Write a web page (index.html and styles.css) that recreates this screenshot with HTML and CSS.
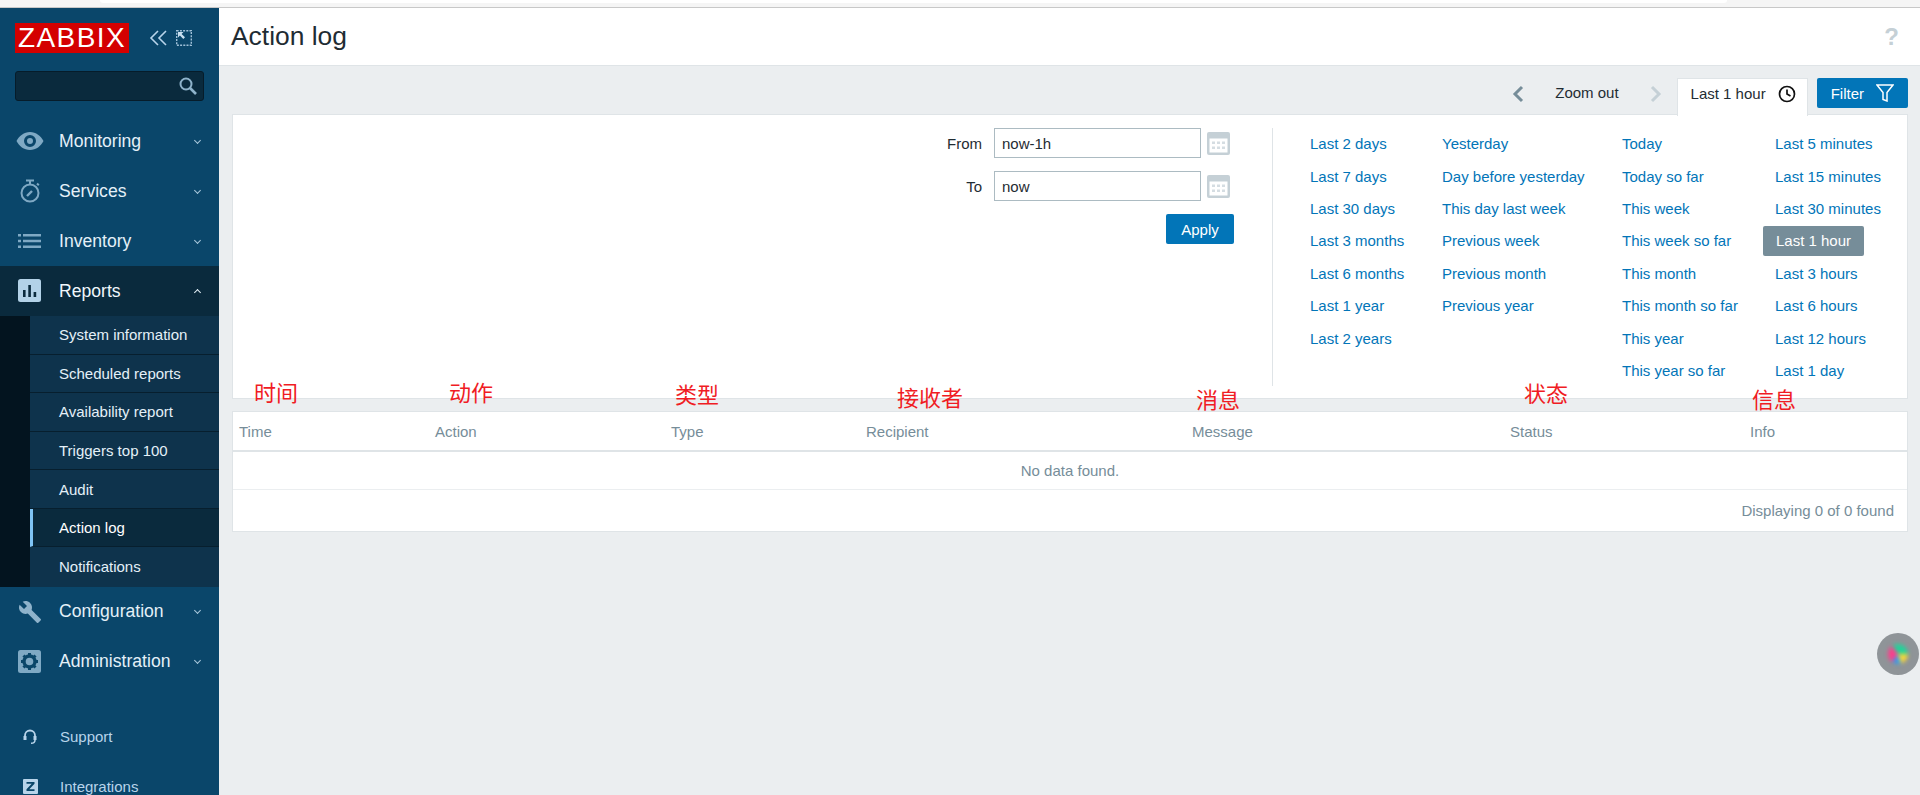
FILE: index.html
```html
<!DOCTYPE html>
<html lang="en">
<head>
  <meta charset="UTF-8">
  <meta name="viewport" content="width=device-width, initial-scale=1.0">
  <title>Action log</title>
  <link rel="stylesheet" href="styles.css">
</head>
<body>
  <div class="browser-strip"><div class="browser-tab"></div></div>
  <div class="layout">
    <aside class="sidebar">
      <div class="logo-row">
        <div class="logo">ZABBIX</div>
        <svg class="side-ctl" width="20" height="16" viewBox="0 0 20 16" fill="none" stroke="#b8d4ea" stroke-width="1.6"><path d="M9 1 2 8l7 7M17 1l-7 7 7 7"/></svg>
        <svg class="side-ctl" width="16" height="16" viewBox="0 0 16 16" fill="none" stroke="#9fc0d8"><rect x="0.700" y="0.700" width="14.600" height="14.600" stroke-width="1.400" stroke-dasharray="2 1.200"/><path d="M2 2h5.500L5.600 3.900 9 7.300 7.300 9 3.900 5.600 2 7.500z" fill="#c8dff0" stroke="none"/></svg>
      </div>
      <div class="search">
        <svg width="20" height="20" viewBox="0 0 20 20" fill="none" stroke="#8fb3cb" stroke-width="2"><circle cx="8" cy="8" r="5.500"/><path d="m12 12 6 6" stroke-width="2.600"/></svg>
      </div>
      <nav class="menu">
        <a class="menu-item">
          <span class="menu-icon"><svg width="28" height="20" viewBox="0 0 28 20"><path fill="#7fa9c4" fill-rule="evenodd" d="M14 1C8 1 3 5 0.500 10 3 15 8 19 14 19s11-4 13.500-9C25 5 20 1 14 1zm0 3a6 6 0 1 1 0 12 6 6 0 0 1 0-12zm0 3a3 3 0 1 0 0 6 3 3 0 0 0 0-6z"/></svg></span>
          <span class="menu-label">Monitoring</span><span class="chev"></span>
        </a>
        <a class="menu-item">
          <span class="menu-icon"><svg width="22" height="24" viewBox="0 0 22 24" fill="none" stroke="#7fa9c4" stroke-width="2"><circle cx="11" cy="14" r="8.500"/><path d="M7 1.500h8M11 2v3M18 4.500l1.800 1.800" /><path d="m8 17 5-5" stroke-width="2.400"/></svg></span>
          <span class="menu-label">Services</span><span class="chev"></span>
        </a>
        <a class="menu-item">
          <span class="menu-icon"><svg width="24" height="16" viewBox="0 0 24 16" fill="#7fa9c4"><path d="M0 1h3v2.600H0zM5 1h18v2.600H5zM0 6.700h3v2.600H0zM5 6.700h18v2.600H5zM0 12.400h3V15H0zM5 12.400h18V15H5z"/></svg></span>
          <span class="menu-label">Inventory</span><span class="chev"></span>
        </a>
        <a class="menu-item open">
          <span class="menu-icon"><svg width="24" height="24" viewBox="0 0 24 24"><rect width="23" height="23" rx="2.500" fill="#b3d2e8"/><path fill="#0a2a3d" d="M5 11h2.600v7H5zM10.300 6h2.600v12h-2.600zM15.600 13h2.600v5h-2.600z"/></svg></span>
          <span class="menu-label">Reports</span><span class="chev up"></span>
        </a>
        <div class="submenu">
          <a class="sub-item">System information</a>
          <a class="sub-item">Scheduled reports</a>
          <a class="sub-item">Availability report</a>
          <a class="sub-item">Triggers top 100</a>
          <a class="sub-item">Audit</a>
          <a class="sub-item current">Action log</a>
          <a class="sub-item">Notifications</a>
        </div>
        <a class="menu-item">
          <span class="menu-icon"><svg width="24" height="24" viewBox="0 0 24 24"><path fill="#8fb3cb" d="M22.700 19l-9.100-9.100c.9-2.300.4-5-1.500-6.900-2-2-5-2.400-7.400-1.300L9 6 6 9 1.600 4.700C.4 7.100.9 10.100 2.900 12.100c1.900 1.900 4.600 2.400 6.900 1.500l9.100 9.100c.4.4 1 .4 1.400 0l2.300-2.300c.5-.4.5-1.100.1-1.400z"/></svg></span>
          <span class="menu-label">Configuration</span><span class="chev"></span>
        </a>
        <a class="menu-item">
          <span class="menu-icon"><svg width="24" height="24" viewBox="0 0 24 24"><rect width="23" height="23" rx="2.500" fill="#7fa9c4"/><circle cx="11.500" cy="11.500" r="5.500" fill="none" stroke="#0a4669" stroke-width="3.400"/><path stroke="#0a4669" stroke-width="3" d="M11.500 3v3M11.500 17v3M3 11.500h3M17 11.500h3M5.500 5.500l2 2M15.500 15.500l2 2M17.500 5.500l-2 2M7.500 15.500l-2 2"/></svg></span>
          <span class="menu-label">Administration</span><span class="chev"></span>
        </a>
      </nav>
      <div class="user-menu">
        <a class="user-item">
          <span class="user-icon"><svg width="14" height="16" viewBox="0 0 14 16" fill="none" stroke="#b8d4ea" stroke-width="1.800"><path d="M2 8V6.500a5 5 0 0 1 10 0V8"/><path d="M2 7v4M12 7v4" stroke-width="3"/><path d="M12 11c0 2-1.500 3.300-4 3.300" stroke-width="1.500"/></svg></span>
          Support
        </a>
        <a class="user-item">
          <span class="user-icon"><svg width="15" height="15" viewBox="0 0 15 15"><rect width="15" height="15" rx="1" fill="#b8d4ea"/><path fill="#0a4669" d="M3.500 3h8v1.800L6.300 10.300h5.200V12h-8v-1.800l5.200-5.500H3.500z"/></svg></span>
          Integrations
        </a>
      </div>
    </aside>

    <main class="main">
      <header class="page-header">
        <h1>Action log</h1>
        <span class="help">?</span>
      </header>

      <div class="content">
        <div class="filter-tabs">
          <svg class="nav-arrow" width="12" height="18" viewBox="0 0 12 18" fill="none" stroke="#768d99" stroke-width="3"><path d="M10 2 3 9l7 7"/></svg>
          <span class="zoom-out">Zoom out</span>
          <svg class="nav-arrow" width="12" height="18" viewBox="0 0 12 18" fill="none" stroke="#c5d0d6" stroke-width="3"><path d="m2 2 7 7-7 7"/></svg>
          <div class="tab-active">
            Last 1 hour
            <svg width="18" height="18" viewBox="0 0 18 18" fill="none" stroke="#111" stroke-width="1.700"><circle cx="9" cy="9" r="7.500"/><path d="M9 4.500V9l3.500 2"/></svg>
          </div>
          <button class="btn-filter">
            Filter
            <svg width="18" height="18" viewBox="0 0 18 18" fill="none" stroke="#fff" stroke-width="1.500"><path d="M1 1h16l-6 7.500V17l-4-1.500v-7z"/></svg>
          </button>
        </div>

        <section class="filter-panel">
          <div class="time-form">
            <div class="form-row">
              <label>From</label>
              <input class="time-input" type="text" value="now-1h">
              <svg class="cal" width="23" height="23" viewBox="0 0 23 23"><rect width="23" height="23" rx="2" fill="#c5d0d6"/><rect x="2.500" y="6.500" width="18" height="14" fill="#fff"/><path fill="#d5dde2" d="M5 9.500h3v2.500H5zM10 9.500h3v2.500h-3zM15 9.500h3v2.500h-3zM5 14.500h3V17H5zM10 14.500h3V17h-3zM15 14.500h3V17h-3z"/></svg>
            </div>
            <div class="form-row">
              <label>To</label>
              <input class="time-input" type="text" value="now">
              <svg class="cal" width="23" height="23" viewBox="0 0 23 23"><rect width="23" height="23" rx="2" fill="#c5d0d6"/><rect x="2.500" y="6.500" width="18" height="14" fill="#fff"/><path fill="#d5dde2" d="M5 9.500h3v2.500H5zM10 9.500h3v2.500h-3zM15 9.500h3v2.500h-3zM5 14.500h3V17H5zM10 14.500h3V17h-3zM15 14.500h3V17h-3z"/></svg>
            </div>
            <button class="btn-apply">Apply</button>
          </div>
          <div class="quick-ranges">
            <ul class="range-col col-a">
              <li><a>Last 2 days</a></li>
              <li><a>Last 7 days</a></li>
              <li><a>Last 30 days</a></li>
              <li><a>Last 3 months</a></li>
              <li><a>Last 6 months</a></li>
              <li><a>Last 1 year</a></li>
              <li><a>Last 2 years</a></li>
            </ul>
            <ul class="range-col col-b">
              <li><a>Yesterday</a></li>
              <li><a>Day before yesterday</a></li>
              <li><a>This day last week</a></li>
              <li><a>Previous week</a></li>
              <li><a>Previous month</a></li>
              <li><a>Previous year</a></li>
            </ul>
            <ul class="range-col col-c">
              <li><a>Today</a></li>
              <li><a>Today so far</a></li>
              <li><a>This week</a></li>
              <li><a>This week so far</a></li>
              <li><a>This month</a></li>
              <li><a>This month so far</a></li>
              <li><a>This year</a></li>
              <li><a>This year so far</a></li>
            </ul>
            <ul class="range-col col-d">
              <li><a>Last 5 minutes</a></li>
              <li><a>Last 15 minutes</a></li>
              <li><a>Last 30 minutes</a></li>
              <li><a class="selected">Last 1 hour</a></li>
              <li><a>Last 3 hours</a></li>
              <li><a>Last 6 hours</a></li>
              <li><a>Last 12 hours</a></li>
              <li><a>Last 1 day</a></li>
            </ul>
          </div>
        </section>

        <section class="table-card">
          <table class="log-table">
            <thead>
              <tr>
                <th class="w-time">Time</th>
                <th class="w-action">Action</th>
                <th class="w-type">Type</th>
                <th class="w-recipient">Recipient</th>
                <th class="w-message">Message</th>
                <th class="w-status">Status</th>
                <th>Info</th>
              </tr>
            </thead>
            <tbody>
              <tr><td class="no-data" colspan="7">No data found.</td></tr>
            </tbody>
          </table>
          <div class="table-stats">Displaying 0 of 0 found</div>
        </section>
      </div>
    </main>
  </div>

  <!-- red notes drawn on top of the screenshot -->
  <span class="note note-time">时间</span>
  <span class="note note-action">动作</span>
  <span class="note note-type">类型</span>
  <span class="note note-recipient">接收者</span>
  <span class="note note-message">消息</span>
  <span class="note note-status">状态</span>
  <span class="note note-info">信息</span>

  <div class="float-ball"><div class="ball-core"></div></div>
</body>
</html>
```

FILE: styles.css
```css
/* General Styles */
* {
  box-sizing: border-box;
}

html, body {
  margin: 0;
  height: 100%;
  overflow: hidden;
}

body {
  position: relative;
  font-family: 'Liberation Sans', Arial, sans-serif;
  font-size: 15px;
  color: #1f2c33;
  background: #ebeef0;
  display: flex;
  flex-direction: column;
}

.browser-strip {
  height: 8px;
  flex: none;
  background: #f5f5f5;
  border-bottom: 1px solid #c8c8c8;
}

.browser-tab {
  margin-left: 100px;
  width: 1627px;
  height: 3px;
  background: #fff;
  border-radius: 0 0 4px 4px;
}

.layout {
  flex: 1;
  display: flex;
  min-height: 0;
}

/* Sidebar */
.sidebar {
  width: 219px;
  flex: none;
  background: #0a466a;
  overflow: hidden;
}

.logo-row {
  display: flex;
  align-items: center;
  height: 30px;
  margin: 15px 0 0 15px;
}

.logo {
  width: 114px;
  height: 30px;
  background: #d40000;
  color: #fff;
  font-size: 28px;
  line-height: 30px;
  text-align: center;
  letter-spacing: 1.400px;
  margin-right: 20px;
}

.side-ctl {
  margin-right: 7px;
}

.search {
  display: flex;
  align-items: center;
  justify-content: flex-end;
  width: 189px;
  height: 30px;
  margin: 18px 0 0 15px;
  padding-right: 5px;
  background: #0a2a3d;
  border: 1px solid #061c2a;
  border-radius: 3px;
}

.menu {
  margin-top: 15px;
}

.menu-item {
  display: flex;
  align-items: center;
  height: 50px;
  color: #e4f0f8;
  font-size: 17.600px;
}

.menu-item.open {
  background: #0a2a3d;
  color: #f0f7fc;
}

.menu-icon {
  width: 59px;
  flex: none;
  display: flex;
  justify-content: center;
}

.menu-label {
  flex: 1;
}

.chev {
  width: 5px;
  height: 5px;
  margin: -2px 19px 0 0;
  border-right: 1.200px solid #a9c8dc;
  border-bottom: 1.200px solid #a9c8dc;
  transform: rotate(45deg);
}

.chev.up {
  margin-top: 3px;
  border-color: #e4f0f8;
  transform: rotate(225deg);
}

.submenu {
  padding-left: 30px;
  background: #03141f;
}

.sub-item {
  display: flex;
  align-items: center;
  height: 38.570px;
  padding-left: 29px;
  color: #e4f0f8;
  background: #0e334c;
  border-bottom: 1px solid #071f2e;
}

.sub-item:last-child {
  height: 39.500px;
  padding-bottom: 1px;
  border-bottom: 0;
}

.sub-item.current {
  background: #0a2a3d;
  color: #fff;
  border-left: 3px solid #7fc4f5;
  padding-left: 26px;
}

.user-menu {
  margin-top: 25px;
}

.user-item {
  display: flex;
  align-items: center;
  height: 50px;
  color: #b8d4ea;
}

.user-icon {
  width: 60px;
  display: flex;
  justify-content: center;
}

/* Main */
.main {
  flex: 1;
  min-width: 0;
  display: flex;
  flex-direction: column;
}

.page-header {
  height: 58px;
  flex: none;
  display: flex;
  align-items: center;
  justify-content: space-between;
  padding: 0 21px 0 12px;
  background: #fff;
  border-bottom: 1px solid #dfe4e7;
}

h1 {
  margin: 0;
  font-size: 26.400px;
  font-weight: normal;
  color: #1f2c33;
}

.help {
  font-size: 24px;
  font-weight: bold;
  color: #c5d0d6;
}

.content {
  padding: 12px 12px 0 13px;
}

.filter-tabs {
  display: flex;
  align-items: flex-start;
  justify-content: flex-end;
  height: 36px;
  position: relative;
  z-index: 1;
}

.nav-arrow {
  margin-top: 7px;
}

.zoom-out {
  margin: 0 31px 0 31px;
  line-height: 30px;
}

.tab-active {
  display: flex;
  align-items: center;
  gap: 12px;
  height: 38px;
  padding: 0 11px 8px 13px;
  margin-left: 15px;
  background: #fff;
  border: 1px solid #dfe4e7;
  border-bottom: 0;
}

.btn-filter {
  display: flex;
  align-items: center;
  gap: 12px;
  height: 30px;
  margin-left: 9px;
  padding: 0 14px;
  border: 0;
  border-radius: 2px;
  background: #0275b8;
  color: #fff;
  font-family: inherit;
  font-size: 15px;
}

.filter-panel {
  display: flex;
  height: 285px;
  background: #fff;
  border: 1px solid #dfe4e7;
}

.time-form {
  width: 1040px;
  flex: none;
  padding-top: 13px;
}

.form-row {
  display: flex;
  align-items: center;
  justify-content: flex-end;
  height: 30px;
  margin-bottom: 13px;
  padding-right: 43px;
}

.form-row label {
  margin-right: 12px;
}

.time-input {
  width: 207px;
  height: 30px;
  padding: 0 7px;
  border: 1px solid #acbbc2;
  font-family: inherit;
  font-size: 15px;
  color: #1f2c33;
  outline: none;
}

.cal {
  margin-left: 6px;
}

.btn-apply {
  display: block;
  width: 68px;
  height: 30px;
  margin-left: auto;
  margin-right: 39px;
  border: 0;
  border-radius: 2px;
  background: #0275b8;
  color: #fff;
  font-family: inherit;
  font-size: 15px;
}

.quick-ranges {
  flex: 1;
  margin: 13px 0 12px -1px;
  border-left: 1px solid #dfe4e7;
  display: flex;
}

.range-col {
  list-style: none;
  margin: -0.500px 0 0;
  padding: 0;
}

.range-col li {
  height: 32.400px;
  display: flex;
  align-items: center;
}

.range-col a {
  color: #0275b8;
  white-space: nowrap;
}

.col-a { width: 132px; margin-left: 37px; }
.col-b { width: 180px; }
.col-c { width: 153px; }

.range-col a.selected {
  display: block;
  margin-left: -12px;
  padding: 0 13px;
  height: 30px;
  line-height: 30px;
  background: #768d99;
  color: #fff;
  border-radius: 2px;
}

/* Table */
.table-card {
  margin-top: 12px;
  background: #fff;
  border: 1px solid #dfe4e7;
}

.log-table {
  width: 100%;
  border-collapse: collapse;
  table-layout: fixed;
}

.log-table th {
  height: 39px;
  padding: 0 0 0 6px;
  text-align: left;
  font-weight: normal;
  color: #768d99;
  border-bottom: 2px solid #dfe4e7;
}

.w-time { width: 196px; }
.w-action { width: 236px; }
.w-type { width: 195px; }
.w-recipient { width: 326px; }
.w-message { width: 318px; }
.w-status { width: 240px; }

.no-data {
  height: 38px;
  text-align: center;
  color: #768d99;
  border-bottom: 1px solid #ebeef0;
}

.table-stats {
  height: 41px;
  line-height: 41px;
  padding-right: 13px;
  text-align: right;
  color: #768d99;
}

/* Annotations */
.note {
  position: absolute;
  font-family: 'Noto Sans CJK SC', sans-serif;
  font-size: 22px;
  line-height: 26px;
  color: #f01c24;
}

.note-time { left: 254px; top: 378px; }
.note-action { left: 449px; top: 378px; }
.note-type { left: 675px; top: 380px; }
.note-recipient { left: 897px; top: 383px; }
.note-message { left: 1196px; top: 385px; }
.note-status { left: 1524px; top: 379px; }
.note-info { left: 1752px; top: 385px; }

/* Floating ball */
.float-ball {
  position: absolute;
  left: 1877px;
  top: 633px;
  width: 42px;
  height: 42px;
  border-radius: 50%;
  background: #8f9498;
  display: flex;
  align-items: center;
  justify-content: center;
}

.ball-core {
  width: 20px;
  height: 20px;
  border-radius: 50%;
  filter: blur(2px);
  background: conic-gradient(#22d39a 0 25%, #fdd835 25% 45%, #2f9bf0 45% 60%, #ff3d8b 60% 90%, #22d39a 90%);
}
```
